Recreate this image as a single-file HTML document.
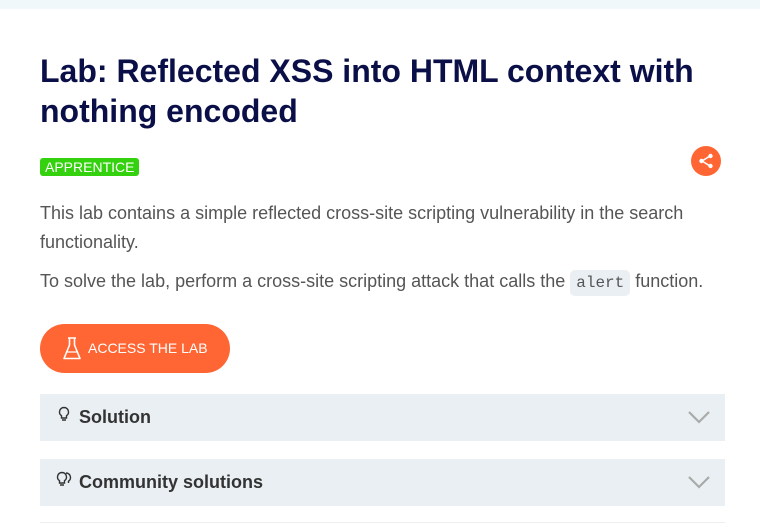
<!DOCTYPE html>
<html><head><meta charset="utf-8"><style>
*{margin:0;padding:0;box-sizing:border-box}
body{width:760px;height:531px;overflow:hidden;background:#fff;font-family:"Liberation Sans",Arial,sans-serif;position:relative}
.top{position:absolute;left:0;top:0;width:760px;height:9px;background:#f1f8f9}
h1{position:absolute;left:40px;top:51px;width:710px;font-size:32px;line-height:40px;font-weight:bold;color:#0a0f48}
.badge{position:absolute;left:40px;top:158px;height:18px;padding:0 5px;background:#34d10e;color:#fff;font-size:14px;line-height:18px;border-radius:3px}
.share{position:absolute;left:691px;top:146px;width:30px;height:30px;border-radius:50%;background:#ff6633}
p{position:absolute;left:40px;font-size:18px;color:#555;line-height:29px;white-space:nowrap}
code{font-family:"Liberation Mono",monospace;font-size:16px;background:#e9eff2;color:#555;padding:4px 6px;border-radius:5px}
.btn{position:absolute;left:40px;top:324px;width:190px;height:49px;border-radius:25px;background:#ff6633;color:#fff;font-size:14px;line-height:49px;padding-left:48px}
.acc{position:absolute;left:40px;width:685px;height:47px;background:#e9eff2;font-weight:bold;font-size:18px;color:#333;line-height:47px;padding-left:39px}
.chev{position:absolute;right:14px;top:16px}
.line{position:absolute;left:40px;top:522px;width:685px;height:1px;background:#eee}
</style></head><body>
<div class="top"></div>
<h1>Lab: Reflected XSS into HTML context with nothing encoded</h1>
<div class="badge">APPRENTICE</div>
<div class="share"><svg width="30" height="30" viewBox="0 0 30 30"><g stroke="#fff" stroke-width="1.6" fill="none"><line x1="19" y1="10" x2="11" y2="15"/><line x1="11" y1="15" x2="19" y2="20"/></g><g fill="#fff"><circle cx="19.5" cy="10" r="2.2"/><circle cx="10.5" cy="15" r="2.2"/><circle cx="19.5" cy="20" r="2.2"/></g></svg></div>
<p style="top:199px">This lab contains a simple reflected cross-site scripting vulnerability in the search<br>functionality.</p>
<p style="top:267px">To solve the lab, perform a cross-site scripting attack that calls the <code>alert</code> function.</p>
<div class="btn"><svg style="position:absolute;left:22px;top:12px" width="20" height="25" viewBox="0 0 20 25"><path d="M6 2h8M7.5 2v7L2 22.5h16L12.5 9V2" fill="none" stroke="#fff" stroke-width="1.6" stroke-linejoin="round"/><path d="M5 16h10" stroke="#fff" stroke-width="1.2"/></svg>ACCESS THE LAB</div>
<div class="acc" style="top:394px"><svg style="position:absolute;left:18px;top:12px" width="12" height="17" viewBox="0 0 12 17"><path d="M6 1.5a4.5 4.5 0 0 0-2.5 8.2V12h5V9.7A4.5 4.5 0 0 0 6 1.5zM4 14h4" fill="none" stroke="#333" stroke-width="1.4"/></svg>Solution<svg class="chev" width="24" height="14" viewBox="0 0 24 14"><path d="M2 2l10 10 10-10" fill="none" stroke="#aaa" stroke-width="2.2"/></svg></div>
<div class="acc" style="top:459px"><svg style="position:absolute;left:16px;top:12px" width="18" height="17" viewBox="0 0 18 17"><path d="M10 2a4.5 4.5 0 0 1 2.5 8.2V12M6 1.5a4.5 4.5 0 0 0-2.5 8.2V12h5V9.7A4.5 4.5 0 0 0 6 1.5zM4 14h4" fill="none" stroke="#333" stroke-width="1.4"/></svg>Community solutions<svg class="chev" width="24" height="14" viewBox="0 0 24 14"><path d="M2 2l10 10 10-10" fill="none" stroke="#aaa" stroke-width="2.2"/></svg></div>
<div class="line"></div>
</body></html>
